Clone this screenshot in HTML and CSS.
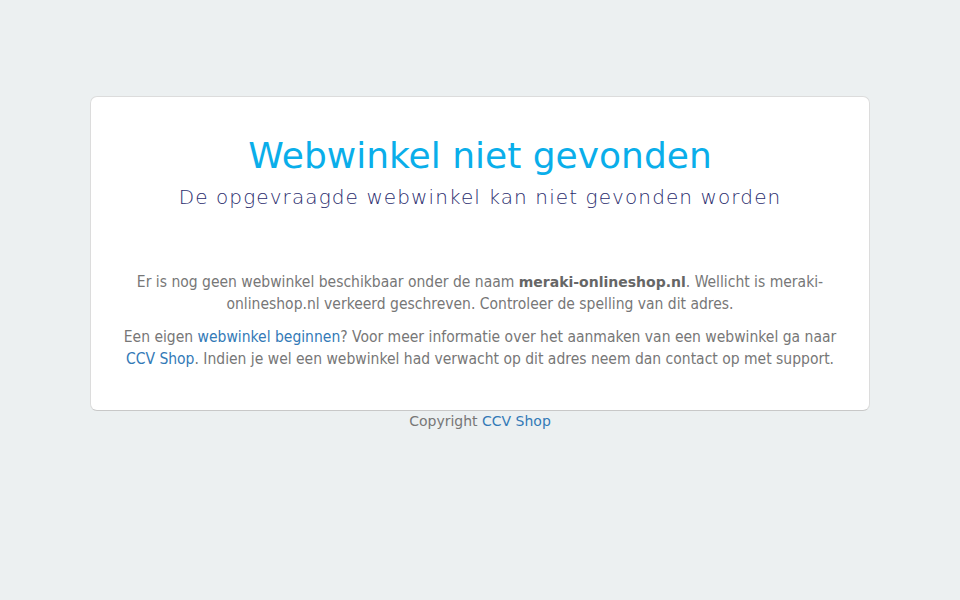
FILE: index.html
```html
<!DOCTYPE html>
<html lang="nl">
<head>
<meta charset="utf-8">
<title>Webwinkel niet gevonden</title>
<link rel="stylesheet" href="styles.css">
</head>
<body>
<div class="wrap">
  <div class="card">
    <h1 class="title">Webwinkel niet gevonden</h1>
    <h2 class="subtitle">De opgevraagde webwinkel kan niet gevonden worden</h2>
    <div class="content">
      <p>Er is nog geen webwinkel beschikbaar onder de naam <strong>meraki-onlineshop.nl</strong>. Wellicht is meraki-onlineshop.nl verkeerd geschreven. Controleer de spelling van dit adres.</p>
      <p>Een eigen <a href="#">webwinkel beginnen</a>? Voor meer informatie over het aanmaken van een webwinkel ga naar <a href="#">CCV Shop</a>. Indien je wel een webwinkel had verwacht op dit adres neem dan contact op met support.</p>
    </div>
  </div>
  <div class="copyright">Copyright <a href="#">CCV Shop</a></div>
</div>
</body>
</html>
```

FILE: styles.css
```css
html, body {
  margin: 0;
  padding: 0;
}
body {
  background: #ecf0f1;
  font-family: "DejaVu Sans", sans-serif;
  color: #777;
}
.wrap {
  width: 780px;
  margin: 96px auto 0;
}
.card {
  background: #fff;
  border: 1px solid #dcdcdc;
  border-bottom-color: #c8c8c8;
  border-radius: 7px;
  padding: 39px 30px 40px;
  text-align: center;
}
.title {
  margin: 0;
  font-weight: normal;
  font-size: 36px;
  line-height: 40px;
  color: #0aaeea;
}
.subtitle {
  margin: 10px 0 0;
  font-weight: 200;
  font-size: 20px;
  line-height: 22px;
  letter-spacing: 1.1px;
  color: #2b2d6e;
}
.content {
  margin-top: 64px;
  font-family: "DejaVu Sans Condensed", "DejaVu Sans", sans-serif;
  font-stretch: condensed;
  font-size: 15.5px;
  line-height: 21.5px;
}
.content p {
  margin: 0 0 12px;
}
.content p:last-child {
  margin-bottom: 0;
}
.content strong {
  font-family: "DejaVu Sans", sans-serif;
  font-stretch: normal;
  font-size: 14px;
  color: #666;
}
a {
  color: #337ab7;
  text-decoration: none;
}
.copyright {
  text-align: center;
  font-size: 14px;
  line-height: 21px;
  color: #777;
}
```
